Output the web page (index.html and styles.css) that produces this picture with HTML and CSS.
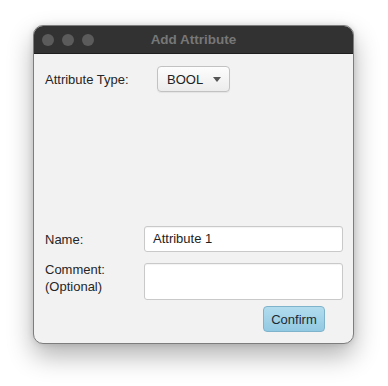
FILE: index.html
```html
<!DOCTYPE html>
<html>
<head>
<meta charset="utf-8">
<link rel="stylesheet" href="styles.css">
</head>
<body>
<div class="window">
  <div class="titlebar">
    <div class="lights">
      <span class="light"></span><span class="light"></span><span class="light"></span>
    </div>
    <div class="title">Add Attribute</div>
  </div>
  <div class="content">
    <div class="type-row">
      <span class="label">Attribute Type:</span>
      <div class="combo">
        <span>BOOL</span>
        <span class="arrow"></span>
      </div>
    </div>
    <div class="form">
      <span class="label name-label">Name:</span>
      <div class="field field-name">Attribute 1</div>
      <span class="label comment-label">Comment:<br>(Optional)</span>
      <div class="field field-comment"></div>
    </div>
    <div class="actions">
      <button class="confirm">Confirm</button>
    </div>
  </div>
</div>
</body>
</html>
```

FILE: styles.css
```css
html, body {
  margin: 0;
  padding: 0;
  background: #ffffff;
}
html {
  height: 100%;
}
body {
  min-height: 386px;
  box-sizing: border-box;
  padding: 25px 0 0 33px;
  font-family: "Liberation Sans", Arial, sans-serif;
  font-size: 13px;
  color: #262626;
}
.window {
  width: 321px;
  height: 319px;
  box-sizing: border-box;
  border-radius: 10px;
  border: 1px solid #7d7d7d;
  background: #f2f2f2;
  box-shadow: 0 12px 26px rgba(0,0,0,0.30), 0 0 6px rgba(0,0,0,0.12);
  overflow: hidden;
  display: flex;
  flex-direction: column;
}
.titlebar {
  height: 27px;
  background: #323232;
  position: relative;
  display: flex;
  align-items: center;
  border-bottom: 1px solid #1e1e1e;
}
.lights {
  display: flex;
  gap: 8px;
  padding-left: 8px;
}
.light {
  width: 12px;
  height: 12px;
  border-radius: 50%;
  background: #5b5b5b;
}
.title {
  position: absolute;
  left: 0;
  right: 0;
  top: 0;
  bottom: 0;
  display: flex;
  align-items: center;
  justify-content: center;
  font-weight: bold;
  font-size: 13.5px;
  color: #777777;
}
.content {
  flex: 1;
  display: flex;
  flex-direction: column;
  padding: 12px 10px 11px 11px;
}
.type-row {
  display: flex;
  align-items: center;
  height: 26px;
}
.type-row .label {
  width: 112px;
}
.combo {
  width: 73px;
  height: 26px;
  box-sizing: border-box;
  border: 1px solid #c2c2c2;
  border-radius: 4px;
  background: linear-gradient(#fdfdfd, #ececec);
  box-shadow: 0 1px 1px rgba(0,0,0,0.06);
  display: flex;
  align-items: center;
  padding-left: 9px;
  gap: 10px;
  color: #222;
}
.arrow {
  width: 0;
  height: 0;
  border-left: 4px solid transparent;
  border-right: 4px solid transparent;
  border-top: 5px solid #555;
}
.form {
  margin-top: auto;
  display: grid;
  grid-template-columns: 99px 1fr;
  row-gap: 11px;
  align-items: start;
}
.label {
  color: #262626;
  line-height: 17px;
}
.name-label {
  align-self: center;
}
.comment-label {
  margin-top: -2px;
}
.field {
  background: #ffffff;
  border: 1px solid #c9c9c9;
  border-radius: 3px;
  box-sizing: border-box;
  box-shadow: inset 0 1px 1px rgba(0,0,0,0.05);
  padding-left: 8px;
  color: #1e1e1e;
}
.field-name {
  height: 26px;
  line-height: 24px;
}
.field-comment {
  height: 37px;
}
.actions {
  display: flex;
  justify-content: flex-end;
  padding-right: 18px;
  margin-top: 6px;
}
.confirm {
  width: 62px;
  height: 26px;
  box-sizing: border-box;
  border: 1px solid #7fb3cb;
  border-radius: 4px;
  background: linear-gradient(#b2dcee, #92c9e2);
  font-family: "Liberation Sans", Arial, sans-serif;
  font-size: 13px;
  color: #1c2a33;
  padding: 0;
}
```
